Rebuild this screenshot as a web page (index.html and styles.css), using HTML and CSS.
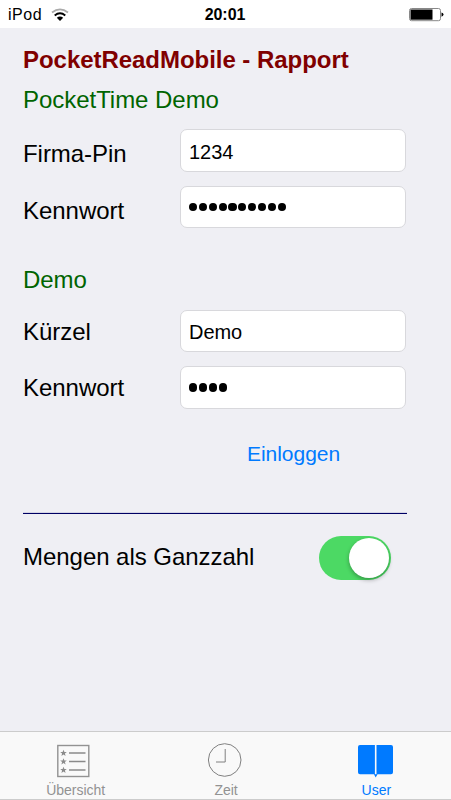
FILE: index.html
```html
<!DOCTYPE html>
<html lang="de">
<head>
<meta charset="utf-8">
<title>PocketReadMobile</title>
<link rel="stylesheet" href="styles.css">
</head>
<body>
<header class="status">
  <div class="carrier"><span>iPod</span>
    <svg class="wifi" width="18" height="14" viewBox="0 0 18 14"><g fill="none" stroke-width="1.8"><path d="M1 4.500Q9-1.800 17 4.500" stroke="#aaa"/><path d="M3.700 7.500Q9 3 14.300 7.500" stroke="#000"/></g><path d="M5.800 9.700Q9 7.300 12.200 9.700L9 13Z"/></svg>
  </div>
  <div class="time">20:01</div>
  <svg class="battery" width="35" height="14" viewBox="0 0 35 14"><rect x=".5" y=".5" width="31" height="12.2" rx="2" fill="#fff" stroke="#888"/><rect x="1.5" y="1.5" width="22" height="10.2"/><path d="M32.5 4.500Q34.500 5 34.500 6.600T32.500 8.800Z"/></svg>
</header>
<main class="content">
  <h1 class="title">PocketReadMobile - Rapport</h1>
  <h2 class="group">PocketTime Demo</h2>
  <div class="row"><span class="label">Firma-Pin</span><div class="field">1234</div></div>
  <div class="row short"><span class="label">Kennwort</span><div class="field dots"><i></i><i></i><i></i><i></i><i></i><i></i><i></i><i></i><i></i><i></i></div></div>
  <h2 class="group second">Demo</h2>
  <div class="row user short"><span class="label">Kürzel</span><div class="field">Demo</div></div>
  <div class="row user"><span class="label">Kennwort</span><div class="field dots"><i></i><i></i><i></i><i></i></div></div>
  <div class="login">Einloggen</div>
  <div class="rule"></div>
  <div class="option"><span>Mengen als Ganzzahl</span><div class="switch"><div class="knob"></div></div></div>
</main>
<nav class="tabs">
  <div class="tab">
    <svg width="36" height="36" viewBox="0 0 36 36"><rect x=".8" y="2.500" width="31" height="31" fill="none" stroke="#929292" stroke-width="1.4"/><path d="M12 10h16.500M12 18.500h16.500M12 27h16.500" stroke="#8a8a8a" stroke-width="1.300"/><g fill="#8a8a8a"><path id="s" d="M6.500 6.800l.9 2.200 2.400.1-1.900 1.500.7 2.400-2.100-1.400-2.100 1.400.7-2.400-1.900-1.500 2.400-.1z"/><use href="#s" y="8.500"/><use href="#s" y="17"/></g></svg>
    <span>Übersicht</span>
  </div>
  <div class="tab">
    <svg width="36" height="36" viewBox="0 0 36 36"><g fill="none" stroke="#808080" stroke-width="1"><circle cx="17.700" cy="17" r="16.300"/><path d="M18.200 6v13H9"/></g></svg>
    <span>Zeit</span>
  </div>
  <div class="tab active">
    <svg width="36" height="36" viewBox="0 0 36 36"><path fill="#007aff" d="M2 2H16.900v29.200H2Q0 31.200 0 29.200V4Q0 2 2 2zM18.500 2H33Q35 2 35 4V29.200Q35 31.200 33 31.200H19.500L17.700 34.500 16 31.200H18.500z"/></svg>
    <span>User</span>
  </div>
</nav>
</body>
</html>
```
FILE: styles.css
```css
* { box-sizing: border-box; }
body {
  margin: 0;
  width: 451px;
  height: 800px;
  display: flex;
  flex-direction: column;
  overflow: hidden;
  background: #efeff4;
  color: #000;
  font: 24px/28px "Liberation Sans", Arial, sans-serif;
  letter-spacing: -.04px;
}
.status {
  height: 28px;
  display: grid;
  grid-template-columns: 1fr auto 1fr;
  align-items: center;
  padding: 1px 7px 0 8px;
  background: #fff;
  font-size: 16px;
}
.carrier { display: flex; align-items: center; gap: 9px; letter-spacing: .5px; }
.time { font-weight: bold; margin-right: 2px; }
.battery { justify-self: end; }
.content { flex: 1; padding: 18px 44px 0 23px; }
.title, .group { margin: 0; font-size: 24px; line-height: 28px; white-space: nowrap; }
.title { color: #800000; font-weight: bold; }
.group { color: #006400; font-weight: normal; margin: 12px 0 15px; }
.group.second { margin-top: 38px; margin-bottom: 16px; }
.row { display: flex; justify-content: space-between; height: 43px; margin-right: 1px; }
.row.short { height: 42px; }
.row + .row { margin-top: 14px; }
.label { padding-top: 11px; }
.user .label { padding-top: 8px; }
.field {
  width: 226px;
  height: 100%;
  padding: 2px 8px 0;
  display: flex;
  align-items: center;
  background: #fff;
  border: 1px solid #d8d8dc;
  border-radius: 7px;
  font-size: 20px;
}
.dots { gap: 1.6px; padding-top: 0; }
.dots i { width: 8.25px; height: 8.25px; border-radius: 50%; background: #000; }
.login { margin: 31px 0 0 224px; color: #007aff; font-size: 21px; }
.rule { height: 2px; margin-top: 44px; border-top: 1px solid #d5d5e5; background: #000064; }
.option { display: flex; justify-content: space-between; padding: 22px 16px 0 0; }
.option span { padding-top: 7px; }
.switch { width: 72px; height: 44px; padding: 2px; border-radius: 22px; background: #4cd964; display: flex; justify-content: flex-end; }
.knob { width: 40px; height: 40px; border-radius: 50%; background: #fff; box-shadow: 0 2px 4px rgba(0,0,0,.3); }
.tabs {
  height: 69px;
  display: grid;
  grid-template-columns: repeat(3, 1fr);
  background: #f9f9f9;
  border-top: 1px solid #ccc;
  border-bottom: 1px solid #ccc;
}
.tab { display: flex; flex-direction: column; align-items: center; padding-top: 11px; color: #929292; font-size: 14px; line-height: 16px; }
.tab span { margin: 3px 0 0 1px; }
.active { color: #007aff; }
```
